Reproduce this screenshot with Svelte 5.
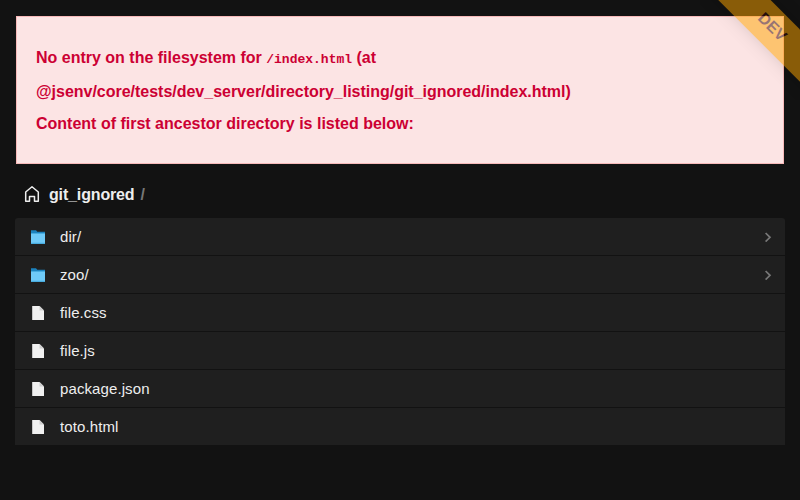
<script>
  const entries = [
    { name: 'dir/', dir: true },
    { name: 'zoo/', dir: true },
    { name: 'file.css' },
    { name: 'file.js' },
    { name: 'package.json' },
    { name: 'toto.html' }
  ];
</script>

<main>
  <div class="error">
    <p>No entry on the filesystem for <code>/index.html</code> (at</p>
    <p class="path">@jsenv/core/tests/dev_server/directory_listing/git_ignored/index.html)</p>
    <p class="below">Content of first ancestor directory is listed below:</p>
  </div>

  <nav>
    <svg class="home" width="16" height="18" viewBox="0 0 16 18" fill="none" stroke="#eee" stroke-width="1.5" stroke-linejoin="round">
      <path d="M1.7 7 8 1.7 14.3 7v9.2h-3.8v-4.6h-5v4.6H1.7z" />
    </svg>
    <strong>git_ignored</strong>
    <span class="slash">/</span>
  </nav>

  <ul>
    {#each entries as entry}
      <li>
        {#if entry.dir}
          <svg class="icon" width="16" height="16" viewBox="0 0 16 16">
            <path d="M1 1.3h5l1.3 1.5H15V8H1z" fill="#1c83bf" />
            <path d="M1 4h14v10.3a.6.6 0 0 1-.6.6H1.6a.6.6 0 0 1-.6-.6z" fill="#6fcaf8" />
            <path d="M1 4h14v1H1zM1 13.8h14v.5a.6.6 0 0 1-.6.6H1.6a.6.6 0 0 1-.6-.6z" fill="#48acdf" />
          </svg>
        {:else}
          <svg class="icon" width="16" height="16" viewBox="0 0 16 16">
            <path d="M2.2 1h7.3L14 5.5V15H2.2z" fill="#f0f0f0" />
            <path d="M9.5 1v4.5H14z" fill="#cfcfcf" />
          </svg>
        {/if}
        <span class="name">{entry.name}</span>
        {#if entry.dir}
          <svg class="arrow" width="8" height="10" viewBox="0 0 8 10" fill="none" stroke="#777" stroke-width="1.7">
            <path d="m1.6 1 4.4 4.3-4.4 4.3" />
          </svg>
        {/if}
      </li>
    {/each}
  </ul>
</main>

<div class="ribbon"><div class="band">DEV</div></div>

<style>
  :global(body) {
    background: #121212;
  }
  main {
    box-sizing: border-box;
    height: 500px;
    padding: 16px 15px 0;
    font-family: 'Liberation Sans', Arial, sans-serif;
    font-size: 16px;
    color: #eee;
  }
  .error {
    box-sizing: border-box;
    height: 148px;
    margin: 0 1px;
    padding: 24px 19px 0;
    border: 1px solid #f7b9b9;
    background: #fce4e4;
    color: #cc0033;
    font-weight: bold;
  }
  .error p {
    height: 34px;
    margin: 0;
    line-height: 34px;
    white-space: nowrap;
  }
  .error .path {
    height: 33px;
    letter-spacing: -0.015px;
  }
  .error .below {
    height: 32px;
    line-height: 32px;
  }
  code {
    font-family: 'Liberation Mono', 'Courier New', monospace;
    font-size: 13px;
  }
  nav {
    display: flex;
    align-items: center;
    height: 54px;
    padding: 8px 9px 0;
    box-sizing: border-box;
  }
  nav strong {
    margin: 0 6px 0 9px;
    line-height: 20px;
    letter-spacing: -0.15px;
  }
  .home {
    position: relative;
    top: -1px;
  }
  .slash {
    color: #777;
    font-weight: bold;
  }
  ul {
    list-style: none;
    margin: 0;
    padding: 0;
    border-radius: 3px 3px 0 0;
    overflow: hidden;
  }
  li {
    display: flex;
    align-items: center;
    height: 37px;
    padding: 0 13px 0 15px;
    background: #1f1f1f;
    font-size: 15px;
  }
  li + li {
    margin-top: 1px;
  }
  .name {
    flex: 1;
    margin-left: 14px;
    line-height: 18px;
    letter-spacing: 0.1px;
  }
  .ribbon {
    position: absolute;
    top: 0;
    right: 0;
    width: 100px;
    height: 100px;
    overflow: hidden;
    opacity: 0.5;
    pointer-events: none;
  }
  .band {
    position: absolute;
    top: 9px;
    left: -28px;
    width: 200px;
    height: 36.5px;
    transform: rotate(45deg);
    background: orange;
    box-shadow: 0 0 15px rgba(0, 0, 0, 0.25);
    color: #370707;
    font: bold 16px/36.5px 'Liberation Sans', Arial, sans-serif;
    text-align: center;
  }
</style>
